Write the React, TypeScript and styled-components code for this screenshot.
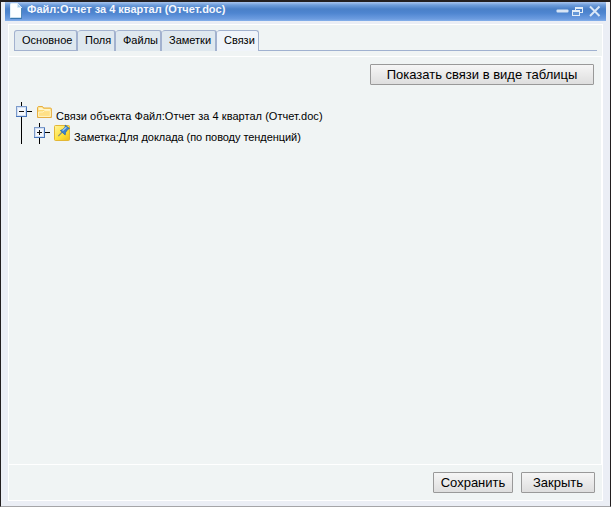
import React from "react";
import styled, { createGlobalStyle } from "styled-components";

const GlobalStyle = createGlobalStyle`
  * { box-sizing: border-box; }
  body { margin: 0; overflow: hidden; background: #ebeef5; }
`;

const Window = styled.div`
  width: 611px;
  height: 507px;
  display: flex;
  flex-direction: column;
  background: #ebeef5;
  border: 1px solid #231f20;
  border-top-width: 2px;
  border-bottom-color: #a5a5a8;
  font: 11px/13px "Liberation Sans", Arial, sans-serif;
  color: #000;
`;

const TitleBar = styled.header`
  flex: none;
  height: 19px;
  margin: 0 4px;
  padding: 0 4px 0 5px;
  display: flex;
  align-items: flex-start;
  background: linear-gradient(#a9c5ef 0, #6f9edb 3px, #4a80c8 7px, #4e85d0 11px, #6c9ce0 17px, #86b0ea 19px);
`;

const Title = styled.h1`
  margin: 1px 0 0 5px;
  flex: 1;
  font-size: 11px;
  line-height: 13px;
  font-weight: bold;
  color: #f4f7fd;
`;

const Controls = styled.div`
  display: flex;
  width: 46px;
  height: 19px;
  svg { display: block; }
`;

const Panel = styled.main`
  width: 595px;
  height: 477px;
  margin: 3px 0 0 7px;
  display: flex;
  flex-direction: column;
  border: 1px solid #fff;
  background: #f0f4f4;
`;

const TabBar = styled.nav`
  display: flex;
  height: 26px;
  margin: 5px 5px 0 5px;
  flex: none;
`;

const Tab = styled.button<{ $w: number; $active?: boolean; $first?: boolean }>`
  width: ${p => p.$w}px;
  height: 21px;
  padding: ${p => (p.$first ? "0 0 1px 7px" : "0 0 2px 7px")};
  border: 1px solid #a3b2cf;
  border-right-width: ${p => (p.$active ? 1 : 2)}px;
  border-left-width: ${p => (p.$first ? 1 : 0)}px;
  border-bottom-width: ${p => (p.$first ? 1 : 0)}px;
  border-radius: 3px 3px 0 0;
  background: ${p => (p.$active ? "#f0f4fa" : "#dfe8ef")};
  font: inherit;
  color: #000;
  text-align: left;
  white-space: nowrap;
`;

const TabRule = styled.div`
  flex: 1;
  height: 21px;
  border-bottom: 1px solid #a0b1d0;
`;

const Content = styled.section`
  height: 409px;
  border: solid #fff;
  border-width: 1px 1px 1px 0;
  padding: 7px 7px 0 7px;
  display: flex;
  flex-direction: column;
`;

const Button = styled.button<{ $w: number }>`
  width: ${p => p.$w}px;
  height: 21px;
  padding: 0;
  border: 1px solid #999;
  border-radius: 1px;
  background: linear-gradient(#f6f6f6, #dedede);
  font: 13px/17px "Liberation Sans", Arial, sans-serif;
  color: #000;
`;

const Toolbar = styled.div`
  display: flex;
  justify-content: flex-end;
`;

const Tree = styled.div`
  margin-top: 17px;
`;

const TreeRow = styled.div`
  height: 21px;
  display: flex;
  svg { display: block; flex: none; }
`;

const IconSlot = styled.span<{ $w: number }>`
  flex: none;
  width: ${p => p.$w}px;
  display: flex;
  justify-content: flex-end;
`;

const Label = styled.span<{ $gap: number; $tracking: number }>`
  margin: 8px 0 0 ${p => p.$gap}px;
  letter-spacing: ${p => p.$tracking}px;
  white-space: nowrap;
`;

const Footer = styled.footer`
  flex: 1;
  display: flex;
  gap: 8px;
  justify-content: flex-end;
  padding: 7px 7px 0 0;
`;

const Toggle = ({ plus = false }: { plus?: boolean }) => (
  <svg width="18" height="21" viewBox="0 0 18 21" shapeRendering="crispEdges">
    <path d="M5.5 0V21M11 9.5H16" stroke="#000" />
    <rect x=".5" y="4.5" width="10" height="10" fill="#f5f8fd" stroke="#7d9bcb" />
    <path d="M1.5 5.5V13.5H9.5V5.5Z" fill="none" stroke="#d5e1f2" />
    <path d="M0 14.5H11M10.5 5V15" stroke="#4775bb" />
    <path d={plus ? "M3 9.5H8M5.5 7V12" : "M3 9.5H8"} stroke="#111" />
  </svg>
);

const Trunk = () => (
  <svg width="18" height="21" viewBox="0 0 18 21" shapeRendering="crispEdges">
    <path d="M5.5 0V21" stroke="#000" />
  </svg>
);

const FolderIcon = () => (
  <svg width="15" height="21" viewBox="0 0 15 21">
    <path d="M.5 15.5V5.3L1.3 4.5H5.5L6.7 6H13.8L14.4 6.8V15.5Z" fill="#fbd873" stroke="#e7ae42" />
    <path d="M1.5 8V5.6H5L6.4 7.1H13.4V8Z" fill="#fff5cb" />
    <path d="M1.6 14.4V10H6L7.5 8.6H13.3V14.4Z" fill="#ffe086" stroke="#fff4c4" />
  </svg>
);

const NoteIcon = () => (
  <svg width="16" height="21" viewBox="0 0 16 21">
    <defs>
      <linearGradient id="note" x1="0" y1="0" x2="1" y2="1">
        <stop stopColor="#fff3a0" /><stop offset=".55" stopColor="#ffe33c" /><stop offset="1" stopColor="#f2bd18" />
      </linearGradient>
    </defs>
    <rect x=".5" y="2.5" width="15" height="15" rx="1" fill="url(#note)" stroke="#e3b735" />
    <path d="M4.3 13.2L8.7 8.5" stroke="#858c83" strokeWidth="1.2" />
    <path d="M6.3 7.6L8.8 6.4L11.2 4.1V2.1L15.4 5.4L13.7 6.5L11.6 9.4L11.2 12Z" fill="#3f83d0" stroke="#2865ad" strokeWidth=".7" />
    <path d="M8.6 7.6L12.4 4.3" stroke="#a8d2fa" strokeWidth="1.2" />
  </svg>
);

const FileIcon = () => (
  <svg width="12" height="18" viewBox="0 0 12 18">
    <path d="M.5 2.2Q.5 1.5 1.2 1.5H7.5L11.5 5.6V15.8H.5Z" fill="#fcfeff" stroke="#e2f0fa" />
    <path d="M.3 16.4H11.7V6" fill="none" stroke="#2e70a9" />
    <path d="M7.5 1.7V5.5H11.4Z" fill="#a3cbea" stroke="#dcedfa" strokeWidth=".6" />
  </svg>
);

const tabs = [
  { text: "Основное", width: 64, first: true },
  { text: "Поля", width: 38 },
  { text: "Файлы", width: 46 },
  { text: "Заметки", width: 55 },
  { text: "Связи", width: 42, active: true },
];

export default function App() {
  return (
    <>
      <GlobalStyle />
      <Window>
        <TitleBar>
          <FileIcon />
          <Title>Файл:Отчет за 4 квартал (Отчет.doc)</Title>
          <Controls>
            <svg width="46" height="19" viewBox="0 0 46 19" fill="none">
              <rect x=".5" y="7.5" width="12" height="3" rx="1" fill="#d8e5f5" />
              <g shapeRendering="crispEdges">
                <path d="M19.5 8V5.5H26.5V10.5H24" stroke="#e3eef8" />
                <path d="M19 6H27" stroke="#e3eef8" strokeWidth="2" />
                <rect x="16.5" y="8.5" width="7" height="5" fill="#6598d8" stroke="#e3eef8" />
                <path d="M16 9H24" stroke="#e3eef8" strokeWidth="2" />
              </g>
              <path d="M34 4.5L43.5 14M43.5 4.5L34 14" stroke="#d9e7f7" strokeWidth="2" />
            </svg>
          </Controls>
        </TitleBar>
        <Panel>
          <TabBar>
            {tabs.map(t => <Tab key={t.text} $w={t.width} $active={t.active} $first={t.first}>{t.text}</Tab>)}
            <TabRule />
          </TabBar>
          <Content>
            <Toolbar><Button $w={224}>Показать связи в виде таблицы</Button></Toolbar>
            <Tree>
              <TreeRow>
                <Toggle />
                <IconSlot $w={18}><FolderIcon /></IconSlot>
                <Label $gap={4} $tracking={0.04}>Связи объекта Файл:Отчет за 4 квартал (Отчет.doc)</Label>
              </TreeRow>
              <TreeRow>
                <Trunk />
                <Toggle plus />
                <IconSlot $w={18}><NoteIcon /></IconSlot>
                <Label $gap={4} $tracking={-0.06}>Заметка:Для доклада (по поводу тенденций)</Label>
              </TreeRow>
            </Tree>
          </Content>
          <Footer>
            <Button $w={80}>Сохранить</Button>
            <Button $w={74}>Закрыть</Button>
          </Footer>
        </Panel>
      </Window>
    </>
  );
}
